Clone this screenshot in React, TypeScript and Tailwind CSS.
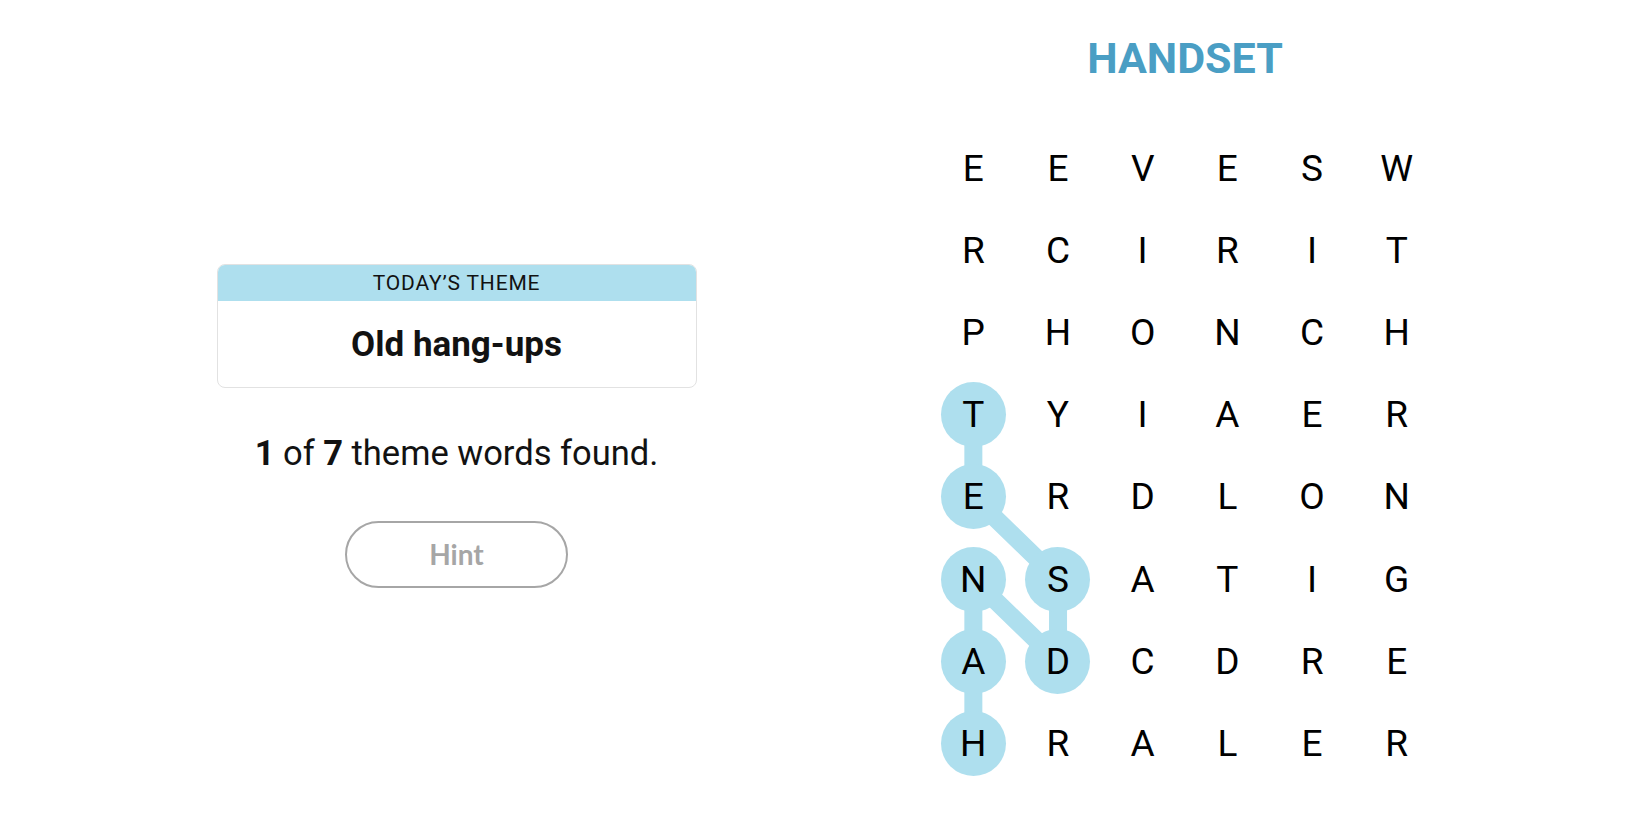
import React from "react";

const GRID = [
  "EEVESW",
  "RCIRIT",
  "PHONCH",
  "TYIAER",
  "ERDLON",
  "NSATIG",
  "ADCDRE",
  "HRALER",
];

const CELL_W = 84.7;
const CELL_H = 82.2;

// found word HANDSET, in order of letters
const FOUND: [number, number][] = [
  [7, 0],
  [6, 0],
  [5, 0],
  [6, 1],
  [5, 1],
  [4, 0],
  [3, 0],
];

const isFound = (r: number, c: number) => FOUND.some(([fr, fc]) => fr === r && fc === c);

function Board() {
  const points = FOUND.map(([r, c]) => `${c * CELL_W + CELL_W / 2},${r * CELL_H + CELL_H / 2}`).join(" ");
  return (
    <div className="relative grid grid-cols-[repeat(6,84.7px)] grid-rows-[repeat(8,82.2px)]">
      <svg
        className="absolute inset-0 pointer-events-none"
        width={CELL_W * 6}
        height={CELL_H * 8}
        viewBox={`0 0 ${CELL_W * 6} ${CELL_H * 8}`}
      >
        <polyline points={points} fill="none" stroke="#aedfee" strokeWidth={18} strokeLinejoin="round" />
      </svg>
      {GRID.map((row, r) =>
        row.split("").map((ch, c) => (
          <div key={`${r}-${c}`} className="relative flex items-center justify-center">
            <button
              type="button"
              className={`flex h-[65px] w-[65px] items-center justify-center rounded-full text-[37px] leading-none text-black ${
                isFound(r, c) ? "bg-[#aedfee]" : ""
              }`}
            >
              {ch}
            </button>
          </div>
        ))
      )}
    </div>
  );
}

export default function App() {
  return (
    <div className="flex h-[825px] w-[1650px] bg-white font-['Roboto','Liberation_Sans',sans-serif] text-[#121212]">
      <div className="flex w-[913px] flex-col items-center pt-[264px]">
        <div className="w-[480px] overflow-hidden rounded-lg border border-[#e2e2e2]">
          <div className="flex h-[36px] items-center justify-center bg-[#aedfee] text-[21px] leading-none tracking-[0.04em] text-[#121212]">
            TODAY’S THEME
          </div>
          <div className="flex h-[86px] items-center justify-center text-[35px] font-bold leading-none">
            Old hang-ups
          </div>
        </div>
        <p className="mt-[48px] text-[34.5px] leading-none">
          <span className="font-bold">1</span> of <span className="font-bold">7</span> theme words found.
        </p>
        <button
          type="button"
          className="mt-[50px] flex h-[67px] w-[223px] items-center justify-center rounded-full border-2 border-[#a6a6a6] font-['Lato','Roboto',sans-serif] text-[28px] font-bold text-[#a6a6a6]"
        >
          Hint
        </button>
      </div>
      <div className="flex w-[544px] flex-col items-center pt-[37px]">
        <h1 className="text-[43px] font-bold leading-none text-[#4a9ec4]">HANDSET</h1>
        <div className="mt-[47px]">
          <Board />
        </div>
      </div>
    </div>
  );
}
